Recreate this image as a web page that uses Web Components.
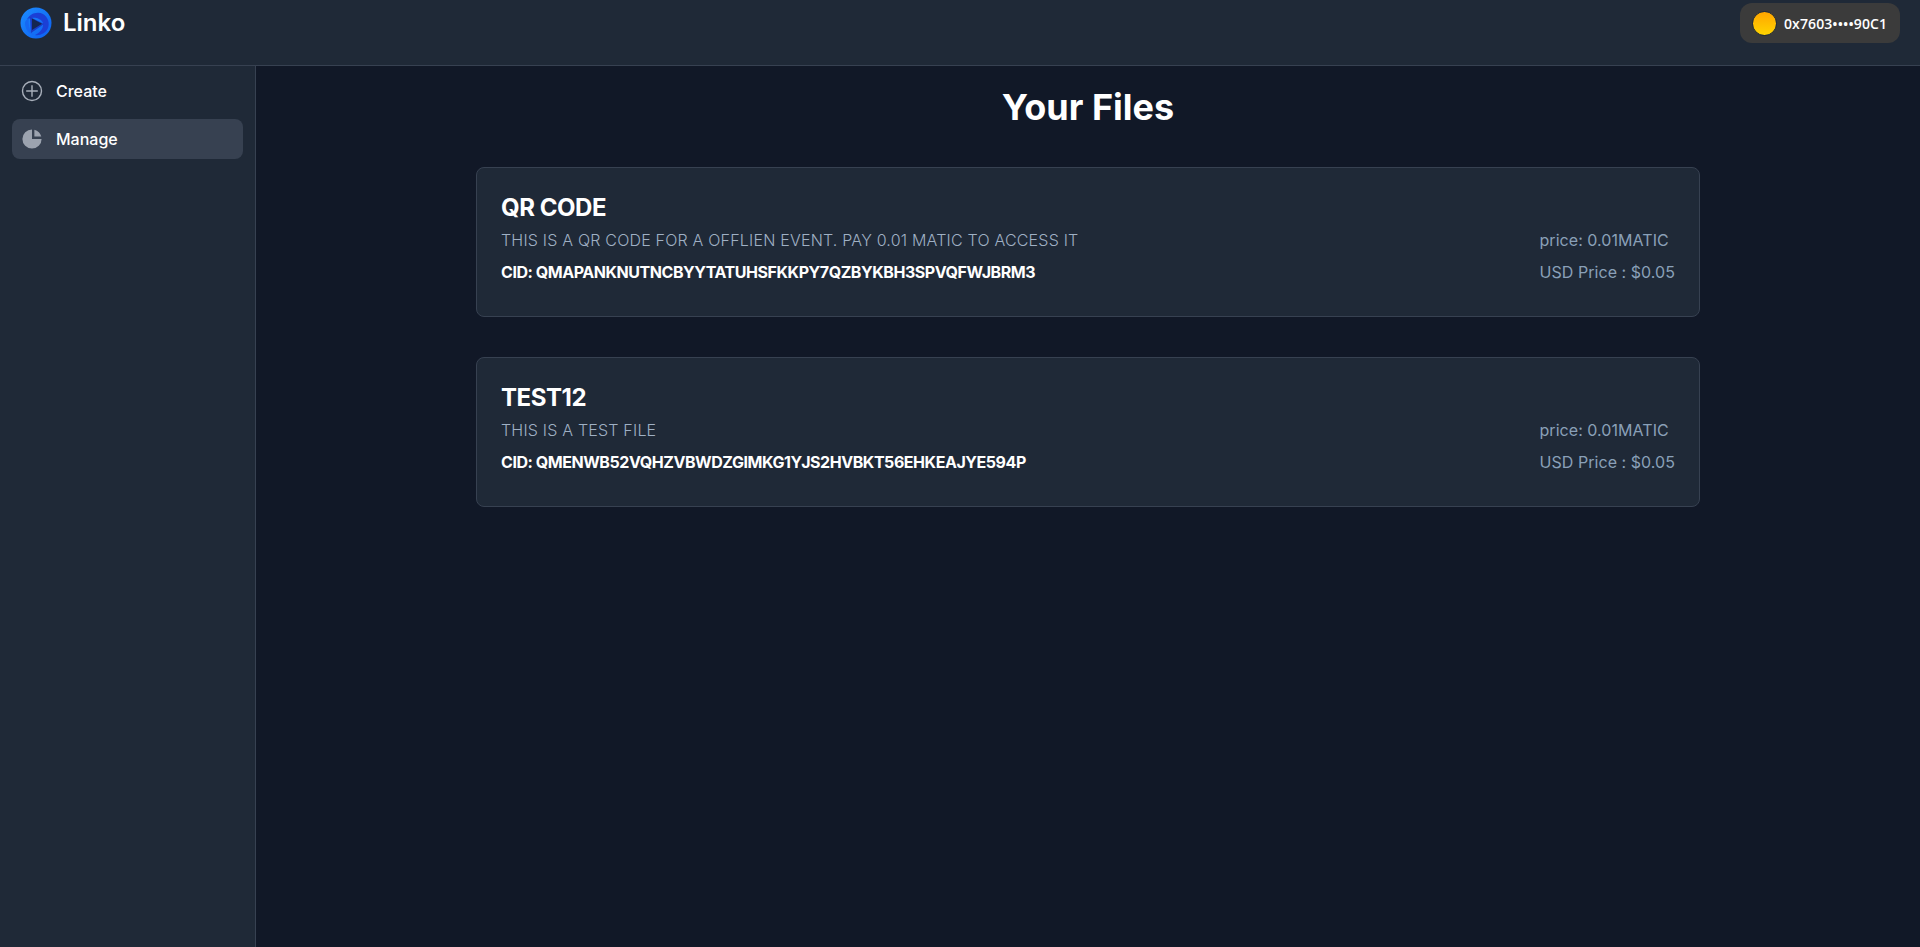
<!DOCTYPE html>
<html>
<head>
<meta charset="utf-8">
<title>Linko</title>
<style>
    html, body { margin: 0; height: 100%; background: #111827; }
    body { font-family: Inter, "Liberation Sans", sans-serif; }
</style>
</head>
<body>
<linko-app>
    <linko-nav slot="nav"></linko-nav>
    <linko-sidebar slot="side">
        <linko-side-item icon="plus">Create</linko-side-item>
        <linko-side-item icon="pie" active>Manage</linko-side-item>
    </linko-sidebar>
    <linko-files>
        <linko-file-card name="QR CODE" cid="QmapanknutncbyyTatuhsfkkpy7qzbykbh3spvqfwjbrm3" price="0.01" usd="0.05">this is a qr code for a offlien event. pay 0.01 matic to access it</linko-file-card>
        <linko-file-card name="TEST12" cid="Qmenwb52vqhzvbwdzgimkg1yjs2hvbkt56ehkeajye594p" price="0.01" usd="0.05">this is a test file</linko-file-card>
    </linko-files>
</linko-app>

<script>
class LinkoApp extends HTMLElement
{
    constructor()
    {
        super();
        this.attachShadow({mode: 'open'}).innerHTML = `
            <style>
                :host { display: flex; flex-direction: column; height: 947px; overflow: hidden; background: #111827; color: #fff; }
                .body { display: flex; flex: 1; min-height: 0; }
                main { flex: 1; min-width: 0; }
            </style>
            <slot name="nav"></slot>
            <div class="body">
                <slot name="side"></slot>
                <main><slot></slot></main>
            </div>`;
    }
}

class LinkoNav extends HTMLElement
{
    constructor()
    {
        super();
        this.attachShadow({mode: 'open'}).innerHTML = `
            <style>
                :host { display: flex; justify-content: space-between; align-items: flex-start; height: 65px; background: #1f2937; border-bottom: 1px solid #374151; }
                .brand { display: flex; align-items: center; gap: 11px; margin: 7px 0 0 20px; font-size: 24px; line-height: 32px; font-weight: 600; color: #fff; }
                svg { display: block; }
                .wallet { display: flex; align-items: center; gap: 7px; height: 40px; margin: 3px 20px 0 0; padding: 0 12px; box-sizing: border-box; width: 160px; background: #3b3b3b; border-radius: 12px; font-family: "Open Sans", sans-serif; font-size: 14px; font-weight: 600; letter-spacing: 0.1px; white-space: nowrap; color: #fff; }
                .coin { width: 25px; height: 25px; flex: none; border-radius: 50%; background: linear-gradient(#ffa500, #ffd400); border: 1px solid #1f2937; box-sizing: border-box; }
            </style>
            <div class="brand">
                <svg width="32" height="32" viewBox="0 0 32 32">
                    <defs>
                        <linearGradient id="lg" x1="0" y1="0" x2="1" y2="1">
                            <stop offset="0" stop-color="#1c8cff"/><stop offset="1" stop-color="#0d5ff0"/>
                        </linearGradient>
                    </defs>
                    <circle cx="16" cy="16" r="15.5" fill="url(#lg)"/>
                    <path d="M7 13 C9 7 17 4 23 7 C28 10 30 16 28 21 C26 26 20 29 15 28 C19 26 24 22 23 16 C21 11 12 9 7 13Z" fill="#1b3fd6"/>
                    <path d="M9 11 C8 16 9 24 14 28 C9 27 5 22 5 16 C5 14 7 12 9 11Z" fill="#1668f2"/>
                    <path d="M10 10 L24 17 L11 26Z" fill="#1b3bc4"/>
                    <path d="M12 11.5 L22 16.8 L12 23Z" fill="#152650"/>
                </svg>
                <span>Linko</span>
            </div>
            <div class="wallet"><span class="coin"></span><span>0x7603••••90C1</span></div>`;
    }
}

class LinkoSidebar extends HTMLElement
{
    constructor()
    {
        super();
        this.attachShadow({mode: 'open'}).innerHTML = `
            <style>
                :host { display: block; width: 255px; height: 100%; background: #1f2937; border-right: 1px solid #374151; }
                .list { display: flex; flex-direction: column; gap: 8px; padding: 5px 12px 0; }
            </style>
            <div class="list"><slot></slot></div>`;
    }
}

const ICONS = {
    plus: `<circle cx="12" cy="12" r="9.5" fill="none" stroke="#a8afba" stroke-width="1.4"/><path d="M12 6.2v11.6M6.2 12h11.6" fill="none" stroke="#a8afba" stroke-width="1.4"/>`,
    pie: `<g transform="scale(1.2)" fill="#9ca3af"><path d="M2 10a8 8 0 0 1 8-8v8h8a8 8 0 1 1-16 0z"/><path d="M12 2.252A8.014 8.014 0 0 1 17.748 8H12V2.252z"/></g>`
};

class LinkoSideItem extends HTMLElement
{
    constructor()
    {
        super();
        this.attachShadow({mode: 'open'}).innerHTML = `
            <style>
                :host { display: flex; align-items: center; gap: 12px; height: 40px; padding: 0 8px; border-radius: 8px; font-size: 16px; font-weight: 500; color: #fff; }
                :host([active]) { background: #374151; }
                svg { display: block; flex: none; }
            </style>
            <svg width="24" height="24" viewBox="0 0 24 24">${ICONS[this.getAttribute("icon")] || ""}</svg>
            <slot></slot>`;
    }
}

class LinkoFiles extends HTMLElement
{
    constructor()
    {
        super();
        this.attachShadow({mode: 'open'}).innerHTML = `
            <style>
                :host { display: flex; flex-direction: column; align-items: center; }
                h1 { margin: 21px 0 40px; font-size: 36px; line-height: 40px; font-weight: 700; color: #fff; }
                .list { display: flex; flex-direction: column; gap: 40px; width: 1224px; }
            </style>
            <h1>Your Files</h1>
            <div class="list"><slot></slot></div>`;
    }
}

class LinkoFileCard extends HTMLElement
{
    constructor()
    {
        super();
        const name = this.getAttribute("name");
        const cid = this.getAttribute("cid");
        this.attachShadow({mode: 'open'}).innerHTML = `
            <style>
                :host { display: flex; justify-content: space-between; align-items: flex-start; height: 150px; box-sizing: border-box; padding: 24px 24px 0 24px; background: #1f2937; border: 1px solid #374151; border-radius: 8px; }
                .title { font-size: 24px; line-height: 32px; font-weight: 700; letter-spacing: -0.45px; color: #fff; text-transform: uppercase; }
                .desc { margin-top: 4px; font-size: 16px; line-height: 24px; font-weight: 300; letter-spacing: 0.2px; color: #9fb0c4; text-transform: uppercase; }
                .cid { margin-top: 8px; font-size: 16px; line-height: 24px; font-weight: 700; letter-spacing: -0.45px; color: #fff; text-transform: uppercase; }
                .price { display: flex; flex-direction: column; gap: 8px; margin-top: 36px; font-size: 16px; line-height: 24px; font-weight: 400; letter-spacing: 0.05px; color: #8aa0b8; }
            </style>
            <div>
                <div class="title">${name}</div>
                <div class="desc"><slot></slot></div>
                <div class="cid">CID: ${cid}</div>
            </div>
            <div class="price">
                <span>price: ${this.getAttribute("price")}MATIC</span>
                <span>USD Price : $${this.getAttribute("usd")}</span>
            </div>`;
    }
}

customElements.define("linko-app", LinkoApp);
customElements.define("linko-nav", LinkoNav);
customElements.define("linko-sidebar", LinkoSidebar);
customElements.define("linko-side-item", LinkoSideItem);
customElements.define("linko-files", LinkoFiles);
customElements.define("linko-file-card", LinkoFileCard);
</script>
</body>
</html>
